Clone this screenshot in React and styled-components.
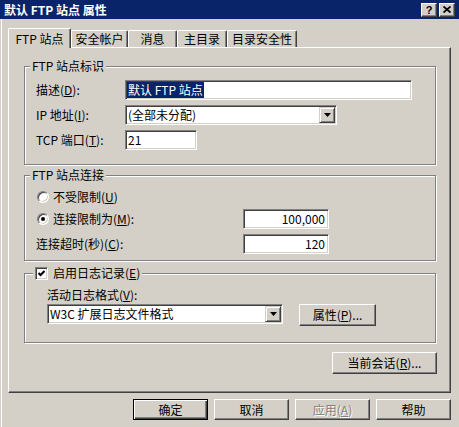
import styled, { createGlobalStyle } from "styled-components";

const GlobalStyle = createGlobalStyle`
  html, body {
    margin: 0;
    padding: 0;
    background: #d4d0c8;
  }
  body {
    font-family: "Noto Sans CJK SC", "Liberation Sans", sans-serif;
    font-size: 12px;
  }
`;

const raised = `
  border: 1px solid;
  border-color: #fff #404040 #404040 #fff;
  box-shadow: inset -1px -1px #808080, inset 1px 1px #d4d0c8;
`;

const sunken = `
  border: 1px solid;
  border-color: #808080 #fff #fff #808080;
  box-shadow: inset 1px 1px #404040, inset -1px -1px #d4d0c8;
`;

const TABS = [
  { label: "FTP 站点", w: 63, active: true },
  { label: "安全帐户", w: 57 },
  { label: "消息", w: 49 },
  { label: "主目录", w: 50 },
  { label: "目录安全性", w: 70 },
];

const Key = ({ children }) => <u>{children}</u>;

const DropDown = ({ width, children }) => (
  <Field $w={width}>
    <FieldText>{children}</FieldText>
    <DropButton>
      <svg width="7" height="4" viewBox="0 0 7 4">
        <path d="M0 0h7L3.5 4z" fill="#000" />
      </svg>
    </DropButton>
  </Field>
);

const Radio = ({ checked, children }) => (
  <RadioItem>
    <RadioDot $checked={checked} />
    <span>{children}</span>
  </RadioItem>
);

export default function App() {
  return (
    <>
      <GlobalStyle />
      <Window>
        <TitleBar>
          <TitleText>默认 FTP 站点 属性</TitleText>
          <CaptionButton>?</CaptionButton>
          <CaptionButton>
            <svg width="8" height="7" viewBox="0 0 8 7">
              <path d="M0.5 0.5L7.5 6.5M7.5 0.5L0.5 6.5" stroke="#000" strokeWidth="1.8" />
            </svg>
          </CaptionButton>
        </TitleBar>

        <Body>
          <TabStrip>
            {TABS.map((t) => (
              <Tab key={t.label} $w={t.w} $active={t.active}>
                {t.label}
              </Tab>
            ))}
          </TabStrip>

          <Panel>
            <Group>
              <GroupTitle $ml={5}>FTP 站点标识</GroupTitle>
              <IdentityRows>
                <FormRow>
                  <RowLabel>
                    描述(<Key>D</Key>):
                  </RowLabel>
                  <Field $w={287}>
                    <Selected>默认 FTP 站点</Selected>
                  </Field>
                </FormRow>
                <FormRow>
                  <RowLabel>
                    IP 地址(<Key>I</Key>):
                  </RowLabel>
                  <DropDown width={212}>(全部未分配)</DropDown>
                </FormRow>
                <FormRow>
                  <RowLabel>
                    TCP 端口(<Key>T</Key>):
                  </RowLabel>
                  <Field $w={72}>
                    <FieldText>21</FieldText>
                  </Field>
                </FormRow>
              </IdentityRows>
            </Group>

            <Group $mt={10}>
              <GroupTitle $ml={5}>FTP 站点连接</GroupTitle>
              <ConnGrid>
                <Radio>
                  不受限制(<Key>U</Key>)
                </Radio>
                <span />
                <Radio checked>
                  连接限制为(<Key>M</Key>):
                </Radio>
                <Field $w={86} $right>
                  <FieldText $right>100,000</FieldText>
                </Field>
                <span>
                  连接超时(秒)(<Key>C</Key>):
                </span>
                <Field $w={86} $right>
                  <FieldText $right>120</FieldText>
                </Field>
              </ConnGrid>
            </Group>

            <Group $mt={12}>
              <GroupTitle $ml={8}>
                <CheckBox>
                  <svg width="7" height="7" viewBox="0 0 7 7">
                    <path d="M0.5 3L2.5 5L6.5 1" stroke="#000" strokeWidth="2" fill="none" />
                  </svg>
                </CheckBox>
                <span>
                  启用日志记录(<Key>E</Key>)
                </span>
              </GroupTitle>
              <LogBody>
                <span>
                  活动日志格式(<Key>V</Key>):
                </span>
                <LogRow>
                  <DropDown width={236}>W3C 扩展日志文件格式</DropDown>
                  <Button $w={77} $h={22}>
                    属性(<Key>P</Key>)...
                  </Button>
                </LogRow>
              </LogBody>
            </Group>

            <SessionButton $w={105} $h={22}>
              当前会话(<Key>R</Key>)...
            </SessionButton>
          </Panel>

          <ButtonRow>
            <Button $w={75} $h={21} $default>
              确定
            </Button>
            <Button $w={75} $h={21}>
              取消
            </Button>
            <Button $w={75} $h={21} disabled>
              应用(<Key>A</Key>)
            </Button>
            <Button $w={75} $h={21}>
              帮助
            </Button>
          </ButtonRow>
        </Body>
      </Window>
    </>
  );
}

// styled-components

const Window = styled.div`
  width: 459px;
  height: 427px;
  display: flex;
  flex-direction: column;
  background: #d4d0c8;
  color: #000;
  font-size: 12px;
  line-height: 14px;
  overflow: hidden;

  u {
    text-underline-offset: 1px;
  }
`;

const TitleBar = styled.div`
  box-sizing: border-box;
  height: 19px;
  flex: none;
  display: flex;
  align-items: center;
  gap: 2px;
  padding: 0 4px 0 4px;
  background: #0a246a;
  color: #fff;
  font-weight: bold;
`;

const TitleText = styled.div`
  flex: 1;
`;

const CaptionButton = styled.div`
  box-sizing: border-box;
  width: 16px;
  height: 14px;
  display: flex;
  align-items: center;
  justify-content: center;
  background: #d4d0c8;
  color: #000;
  font: bold 11px "Liberation Sans", sans-serif;
  ${raised}
`;

const Body = styled.div`
  flex: 1;
  display: flex;
  flex-direction: column;
  padding: 9px 8px 0 8px;
  box-shadow: inset 1px 0 #d4d0c8, inset 2px 0 #fff;
`;

const TabStrip = styled.div`
  height: 19px;
  flex: none;
  display: flex;
  align-items: flex-end;
  position: relative;
  z-index: 1;
`;

const Tab = styled.div`
  box-sizing: border-box;
  width: ${(p) => p.$w}px;
  height: ${(p) => (p.$active ? 20 : 17)}px;
  margin-bottom: ${(p) => (p.$active ? -1 : 0)}px;
  display: flex;
  align-items: center;
  justify-content: center;
  background: #d4d0c8;
  border-top: 1px solid #fff;
  border-left: 1px solid #fff;
  border-right: 1px solid #404040;
  border-radius: 2px 2px 0 0;
  box-shadow: inset -1px 0 #808080;
  white-space: nowrap;
`;

const Panel = styled.div`
  box-sizing: border-box;
  height: 346px;
  flex: none;
  display: flex;
  flex-direction: column;
  padding: 18px 13px 0 15px;
  border: 1px solid;
  border-color: #fff #404040 #404040 #fff;
  box-shadow: inset -1px -1px #808080;
`;

const Group = styled.section`
  margin: ${(p) => p.$mt || 0}px 1px 0 0;
  border: 1px solid #808080;
  box-shadow: inset 1px 1px #fff, 1px 1px #fff;
`;

const GroupTitle = styled.div`
  width: fit-content;
  height: 14px;
  display: flex;
  align-items: center;
  gap: 5px;
  margin: -8px 0 0 ${(p) => p.$ml}px;
  padding: 0 2px;
  background: #d4d0c8;
  white-space: nowrap;
`;

const IdentityRows = styled.div`
  display: flex;
  flex-direction: column;
  gap: 5px;
  padding: 7px 0 14px 11px;
`;

const FormRow = styled.div`
  height: 20px;
  display: flex;
  align-items: center;
`;

const RowLabel = styled.span`
  width: 89px;
  flex: none;
  white-space: nowrap;
`;

const Field = styled.div`
  box-sizing: border-box;
  width: ${(p) => p.$w}px;
  height: 20px;
  flex: none;
  display: flex;
  align-items: center;
  justify-content: ${(p) => (p.$right ? "flex-end" : "flex-start")};
  padding: 1px;
  background: #fff;
  ${sunken}
`;

const FieldText = styled.span`
  flex: ${(p) => (p.$right ? "none" : 1)};
  padding: ${(p) => (p.$right ? "0 2px 0 0" : "0 0 0 1px")};
  white-space: nowrap;
`;

const Selected = styled.span`
  line-height: 16px;
  padding: 0 1px;
  background: #0a246a;
  color: #fff;
  white-space: nowrap;
`;

const DropButton = styled.div`
  box-sizing: border-box;
  width: 16px;
  height: 16px;
  flex: none;
  display: flex;
  align-items: center;
  justify-content: center;
  background: #d4d0c8;
  border: 1px solid;
  border-color: #d4d0c8 #404040 #404040 #d4d0c8;
  box-shadow: inset 1px 1px #fff, inset -1px -1px #808080;
`;

const ConnGrid = styled.div`
  display: grid;
  grid-template-columns: 207px 86px;
  grid-template-rows: 14px 20px 20px;
  row-gap: 5px;
  align-items: center;
  padding: 8px 0 6px 11px;
  white-space: nowrap;
`;

const RadioItem = styled.label`
  display: flex;
  align-items: center;
  gap: 4px;
  margin-left: 1px;
`;

const RadioDot = styled.span`
  box-sizing: border-box;
  width: 12px;
  height: 12px;
  flex: none;
  display: flex;
  align-items: center;
  justify-content: center;
  border-radius: 50%;
  background: #fff;
  ${sunken}

  &::after {
    content: "";
    width: 4px;
    height: 4px;
    border-radius: 50%;
    background: ${(p) => (p.$checked ? "#000" : "transparent")};
  }
`;

const CheckBox = styled.span`
  box-sizing: border-box;
  width: 13px;
  height: 13px;
  flex: none;
  display: flex;
  align-items: center;
  justify-content: center;
  background: #fff;
  ${sunken}
`;

const LogBody = styled.div`
  display: flex;
  flex-direction: column;
  gap: 2px;
  padding: 8px 0 16px 22px;
  white-space: nowrap;
`;

const LogRow = styled.div`
  display: flex;
  align-items: flex-start;
  gap: 16px;
`;

const Button = styled.button`
  box-sizing: border-box;
  width: ${(p) => p.$w}px;
  height: ${(p) => p.$h}px;
  flex: none;
  padding: 0;
  font: inherit;
  line-height: 14px;
  color: #000;
  background: #d4d0c8;
  white-space: nowrap;
  ${raised}

  ${(p) =>
    p.$default &&
    `
    border-color: #000;
    box-shadow: inset 1px 1px #fff, inset -1px -1px #404040, inset -2px -2px #808080;
  `}

  &:disabled {
    color: #808080;
    text-shadow: 1px 1px #fff;
  }
`;

const SessionButton = styled(Button)`
  align-self: flex-end;
  margin-top: 9px;
`;

const ButtonRow = styled.div`
  display: flex;
  justify-content: flex-end;
  gap: 6px;
  margin-top: 6px;
`;
